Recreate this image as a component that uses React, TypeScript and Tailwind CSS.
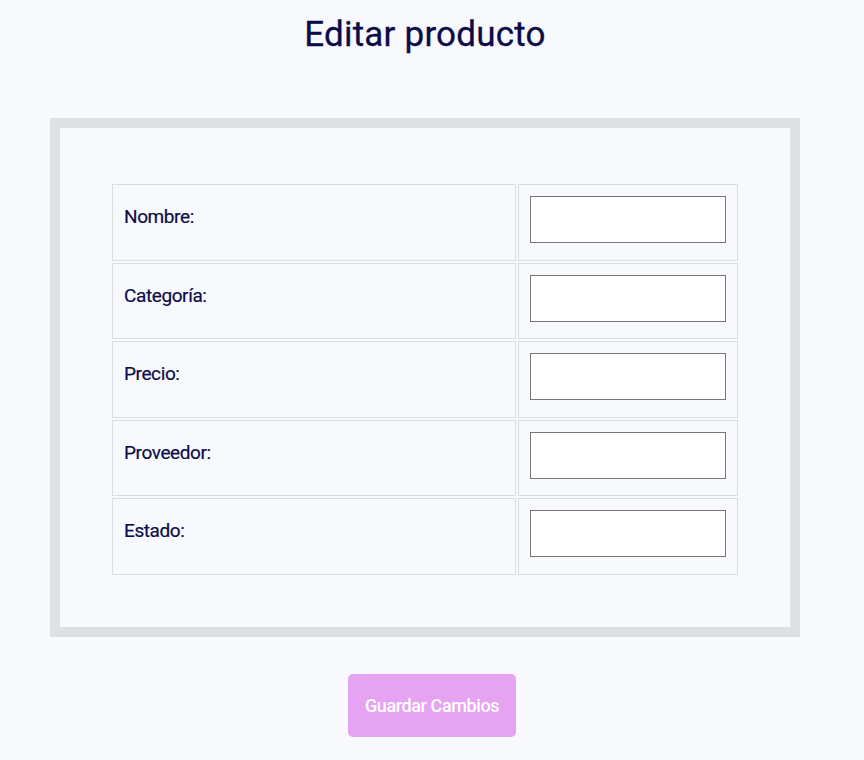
import { Fragment } from 'react'

const fields = ['Nombre:', 'Categoría:', 'Precio:', 'Proveedor:', 'Estado:']

export default function App() {
  return (
    <div className="min-h-screen bg-[#f8f9fd] font-['Roboto',sans-serif] text-[#0c0c48]">
      <div className="w-[750px] ml-[50px] pt-[11px]">
        <h1 className="text-center text-[35px] leading-[48px] tracking-[0.2px] [-webkit-text-stroke:0.3px_#0c0c48]">Editar producto</h1>
      </div>

      <div className="w-[750px] h-[519px] ml-[50px] mt-[59px] border-[10px] border-[#dee0e4] pt-[56px] pl-[52px]">
        <div className="grid grid-cols-[404px_220px] auto-rows-[76.5px] gap-[2px]">
          {fields.map((f) => (
            <Fragment key={f}>
              <div className="border border-[#dcdde3] pl-[11px] pt-[18px] text-[19px] leading-[28px] tracking-[-0.4px] [-webkit-text-stroke:0.2px_#0c0c48]">
                {f}
              </div>
              <div className="border border-[#dcdde3] pl-[11px] pt-[11px]">
                <input type="text" className="block w-[196px] h-[47px] bg-white border border-[#767676]" />
              </div>
            </Fragment>
          ))}
        </div>
      </div>

      <div className="flex justify-center pt-[37px]">
        <button className="w-[168px] h-[63px] rounded-[5px] bg-[#e6a3f2] text-white text-[18px] font-medium tracking-[-0.4px]">
          Guardar Cambios
        </button>
      </div>
    </div>
  )
}
